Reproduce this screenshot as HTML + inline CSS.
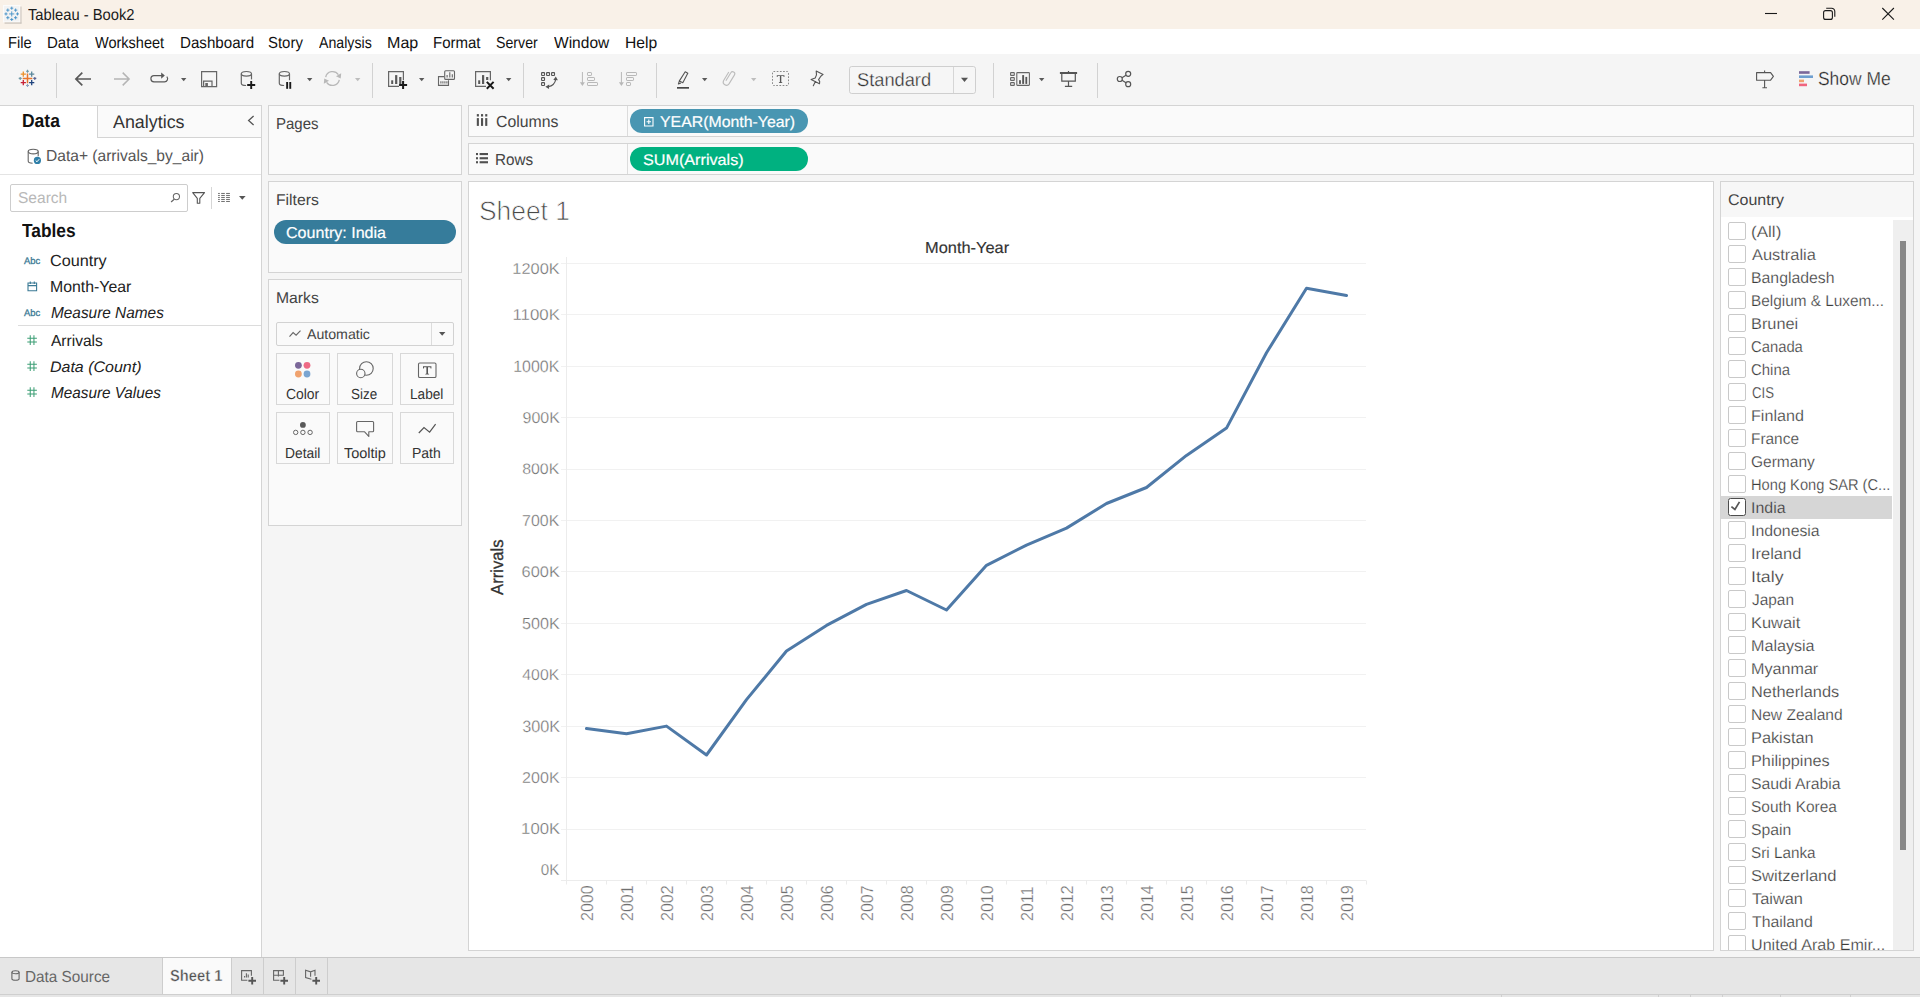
<!DOCTYPE html>
<html>
<head>
<meta charset="utf-8">
<title>Tableau - Book2</title>
<style>
*{box-sizing:border-box;margin:0;padding:0}
html,body{width:1920px;height:997px;overflow:hidden;background:#f5f5f5;font-family:"Liberation Sans",sans-serif;color:#333;text-rendering:geometricPrecision}
.t{position:absolute;white-space:nowrap;transform-origin:0 0}
.abs{position:absolute}
#titlebar{position:absolute;left:0;top:0;width:1920px;height:29px;background:#f9f1e8}
#titlebar .ttl{position:absolute;left:28px;top:4.5px;line-height:20px;font-size:15px;color:#1a1a1a;white-space:nowrap;transform-origin:0 0;transform:scaleX(.98)}
#menubar{position:absolute;left:0;top:29px;width:1920px;height:25px;background:#fff}
#menubar span{position:absolute;top:4px;line-height:20px;font-size:15px;color:#111;white-space:nowrap;transform-origin:0 0;transform:scaleX(.962)}
#toolbar{position:absolute;left:0;top:54px;width:1920px;height:51px;background:#f5f5f5}
.tdiv{position:absolute;top:63px;width:1px;height:35px;background:#d0d0d0}
svg{position:absolute;overflow:visible}
.card{position:absolute;background:#fafafa;border:1px solid #d4d4d4}
.ct{position:absolute;font-size:15px;color:#444;white-space:nowrap}
.pill{position:absolute;border-radius:12px;color:#fff;font-size:15px;white-space:nowrap}
.pill span{position:absolute;top:3.8px;-webkit-text-stroke:0.18px #fff}
#leftpane{position:absolute;left:0;top:105px;width:262px;height:852px;background:#fff;border-right:1px solid #d4d4d4}
.fld{position:absolute;left:50px;font-size:15.8px;color:#222;white-space:nowrap}
.fld.it{font-style:italic;font-size:15.5px;letter-spacing:-.05px}
.abc{position:absolute;left:23.6px;font-size:9.6px;color:#3b7a95;letter-spacing:0;-webkit-text-stroke:.3px #3b7a95;transform-origin:0 0;transform:scaleX(.98)}
.mbtn{position:absolute;width:54px;height:52px;border:1px solid #d8d8d8;background:#fafafa}
.mbtn span{position:absolute;left:0;width:52px;text-align:center;top:32px;font-size:13.6px;color:#333}
.ylab{position:absolute;width:60px;text-align:right;font-size:15.4px;color:#7a7a7a;left:499px;line-height:18px}
.xlab{position:absolute;font-size:15.9px;color:#7a7a7a;transform-origin:0 0;transform:rotate(-90deg);white-space:nowrap;line-height:18px;width:36px;text-align:right}
.cb{position:absolute;left:1728px;width:18px;height:18px;border:1px solid #c9c9c9;border-radius:2px;background:#fff}
.cl{position:absolute;left:1751px;font-size:15.4px;color:#444;white-space:nowrap;line-height:18px}
#tabbar{position:absolute;left:0;top:957px;width:1920px;height:40px;background:#e6e6e6;border-top:1px solid #c8c8c8}
</style>
</head>
<body>
<!-- TITLEBAR -->
<div id="titlebar">
<svg style="left:3px;top:5px" width="18.5" height="19.5" viewBox="0 0 18 19">
<rect x="0.5" y="0.5" width="16" height="16" fill="#f3f3f3" stroke="#fbfbfb"/>
<rect x="17" y="1.5" width="1" height="16.5" fill="#c9c2bb"/><rect x="1.5" y="17" width="16.5" height="1.2" fill="#c9c2bb"/>
<g stroke="#3f8fc6" stroke-width=".85" fill="none">
<path d="M8.5 6.2v5M6 8.7h5"/>
<path d="M8.5 1.6v3M7 3.1h3M8.5 12.6v3M7 14.1h3M2.9 7.2v3M1.4 8.7h3M14.1 7.2v3M12.6 8.7h3"/>
<path d="M4.7 3.4v3.2M3.1 5h3.2M12.3 3.4v3.2M10.7 5h3.2M4.7 10.8v3.2M3.1 12.4h3.2M12.3 10.8v3.2M10.7 12.4h3.2"/>
</g></svg>
<svg style="left:1765px;top:7px" width="130" height="14" viewBox="0 0 130 14">
<path d="M0 6.5h12" stroke="#1a1a1a" stroke-width="1.1" fill="none"/>
<rect x="58.6" y="3.6" width="8.8" height="8.8" rx="2" fill="none" stroke="#1a1a1a" stroke-width="1.1"/>
<path d="M61.2 1.2h5.4a3.2 3.2 0 0 1 3.2 3.2v5.4" fill="none" stroke="#1a1a1a" stroke-width="1.1"/>
<path d="M117.3 1l11.6 11.6M128.9 1l-11.6 11.6" stroke="#1a1a1a" stroke-width="1.1" fill="none"/>
</svg>
</div>
<!-- MENUBAR -->
<div id="menubar">

</div>
<!-- TOOLBAR -->
<div id="toolbar">
<svg style="left:0;top:0" width="1920" height="51" viewBox="0 54 1920 51">
<defs>
<path id="car" d="M0 0h5.4l-2.7 3.2z"/>
</defs>
<!-- dividers -->
<g fill="#d2d2d2">
<rect x="56" y="63" width="1" height="35"/><rect x="372" y="63" width="1" height="35"/><rect x="523" y="63" width="1" height="35"/><rect x="656" y="63" width="1" height="35"/><rect x="993" y="63" width="1" height="35"/><rect x="1097" y="63" width="1" height="35"/>
</g>
<!-- tableau logo -->
<g fill="none" stroke-width="1.3">
<path d="M27.5 73.6v9.6M22.7 78.4h9.6" stroke="#e8762d" stroke-width="1.5"/>
<path d="M23.3 71.5v5.2M20.7 74.1h5.2" stroke="#eb912c"/>
<path d="M31.7 71.5v5.2M29.1 74.1h5.2" stroke="#59879b"/>
<path d="M23.3 80.1v5.2M20.7 82.7h5.2" stroke="#c72035"/>
<path d="M31.7 80.1v5.2M29.1 82.7h5.2" stroke="#1f447e"/>
<path d="M27.5 69.8v3M26 71.3h3" stroke="#7099a6" stroke-width="1.1"/>
<path d="M27.5 84v3M26 85.5h3" stroke="#8da2c0" stroke-width="1.1"/>
<path d="M20.2 76.9v3M18.7 78.4h3" stroke="#7099a6" stroke-width="1.1"/>
<path d="M34.8 76.9v3M33.3 78.4h3" stroke="#5c6692" stroke-width="1.1"/>
</g>
<!-- back / forward -->
<path d="M91 79H76M82.3 72.6L75.9 79l6.4 6.4" fill="none" stroke="#595959" stroke-width="1.7"/>
<path d="M114 79h15M122.7 72.6l6.4 6.4-6.4 6.4" fill="none" stroke="#b4b4b4" stroke-width="1.5"/>
<!-- redo-ish -->
<path d="M163.5 75.6H154a3.1 3.1 0 0 0 0 6.2h10.5a3.1 3.1 0 0 0 2.3-5.2" fill="none" stroke="#595959" stroke-width="1.2"/>
<path d="M161.2 72.4l3.6 3.2-3.6 3.2z" fill="#595959"/>
<use href="#car" x="181" y="78" fill="#595959"/>
<!-- save -->
<path d="M201.6 71.6h15v15h-15z" fill="none" stroke="#666" stroke-width="1.2"/>
<path d="M203.6 86.6v-5.4h8.4v5.4" fill="none" stroke="#666" stroke-width="1.2"/>
<rect x="205.3" y="83" width="2.6" height="3.6" fill="#666"/>
<!-- new datasource -->
<g fill="none" stroke="#666" stroke-width="1.2">
<ellipse cx="246.4" cy="73.8" rx="5.1" ry="2.3"/>
<path d="M241.3 73.8v9.4c0 1.3 2 2.3 4.8 2.3"/>
<path d="M251.5 73.8v5.6"/>
</g>
<path d="M251.2 81v8M247.2 85h8" stroke="#1a1a1a" stroke-width="1.9" fill="none"/>
<!-- pause datasource -->
<g fill="none" stroke="#666" stroke-width="1.2">
<ellipse cx="284.4" cy="73.8" rx="5.1" ry="2.3"/>
<path d="M279.3 73.8v9.4c0 1.3 2 2.3 4.8 2.3"/>
<path d="M289.5 73.8v6.4"/>
</g>
<rect x="286.2" y="82" width="1.9" height="6.8" fill="#1a1a1a"/><rect x="289.3" y="82" width="1.9" height="6.8" fill="#1a1a1a"/>
<use href="#car" x="307" y="78" fill="#595959"/>
<!-- refresh -->
<g fill="none" stroke="#b8b8b8" stroke-width="1.3">
<path d="M325.7 77.2A7 7 0 0 1 338.4 74.7"/>
<path d="M339.3 79.8A7 7 0 0 1 326.6 82.3"/>
</g>
<path d="M341.2 73.2l-.5 5.4-4.7-2.4z" fill="#b8b8b8"/><path d="M323.8 83.8l.5-5.4 4.7 2.4z" fill="#b8b8b8"/>
<use href="#car" x="355" y="78" fill="#bdbdbd"/>
<!-- new worksheet -->
<path d="M399 86.4h-10.4V71.6h14.8v8.6" fill="none" stroke="#666" stroke-width="1.2"/>
<g fill="#595959"><rect x="391.2" y="80.3" width="2" height="3.7"/><rect x="395.1" y="75.1" width="2.2" height="8.9"/><rect x="399.2" y="77" width="2.2" height="7"/></g>
<path d="M403.1 81v8M399.1 85h8" stroke="#1a1a1a" stroke-width="2" fill="none"/>
<use href="#car" x="419" y="78" fill="#595959"/>
<!-- duplicate -->
<g fill="none" stroke="#666" stroke-width="1.1">
<path d="M444 76.6h-5.5v8.8h10v-5.2"/>
<rect x="444.7" y="70.8" width="9.8" height="8.6" rx="1" fill="#f5f5f5"/>
</g>
<path d="M447.1 77.5v-2.4M449.8 77.5v-5.2M452.3 77.5v-3.3M440.9 83.6v-2.4M442.9 83.6v-2.4M444.9 83.6v-2.4M446.9 83.6v-2.4" stroke="#666" stroke-width="1.1" fill="none"/>
<!-- clear sheet -->
<path d="M486 86.4h-10.4V71.6h14.8v8.6" fill="none" stroke="#666" stroke-width="1.2"/>
<g fill="#595959"><rect x="478.2" y="80.3" width="2" height="3.7"/><rect x="482" y="75.1" width="2.2" height="8.9"/><rect x="486.1" y="77" width="2.2" height="3"/></g>
<path d="M486.8 81.9l6.8 6.8M493.6 81.9l-6.8 6.8" stroke="#1a1a1a" stroke-width="2" fill="none"/>
<use href="#car" x="506" y="78" fill="#595959"/>
<!-- swap -->
<g fill="none" stroke="#555" stroke-width="1.1">
<rect x="541.6" y="72.6" width="2.9" height="2.9" rx=".5"/><rect x="546.6" y="72.6" width="2.9" height="2.9" rx=".5"/><rect x="551.6" y="72.6" width="2.9" height="2.9" rx=".5"/>
<rect x="541.6" y="77.6" width="2.9" height="2.9" rx=".5"/><rect x="541.6" y="82.6" width="2.9" height="2.9" rx=".5"/>
<path d="M548 86.7c4.4-.6 7.2-3.5 7.8-7.8"/>
</g>
<path d="M553.3 80l2.5-3.6 2.1 3.8z" fill="#555"/><path d="M549.2 84.5l-3.8 2.2 3.6 2.2z" fill="#555"/>
<!-- sort asc -->
<g fill="none" stroke="#b8b8b8" stroke-width="1">
<path d="M582.4 72v11"/><rect x="587.5" y="72.5" width="4" height="3" rx=".6"/><rect x="587.5" y="77.5" width="7" height="3" rx=".6"/><rect x="587.5" y="82.5" width="10" height="3" rx=".6"/>
</g><path d="M579.9 82.3h5l-2.5 3.8z" fill="#b8b8b8"/>
<!-- sort desc -->
<g fill="none" stroke="#b8b8b8" stroke-width="1">
<path d="M621.4 72v11"/><rect x="626.5" y="72.5" width="10" height="3" rx=".6"/><rect x="626.5" y="77.5" width="7" height="3" rx=".6"/><rect x="626.5" y="82.5" width="4" height="3" rx=".6"/>
</g><path d="M618.9 82.3h5l-2.5 3.8z" fill="#b8b8b8"/>
<!-- highlighter -->
<path d="M685.2 71.8l2.6 1.5-5 9.4-3.4-1.8z M679.4 80.9l-1 3 2.6-1" fill="none" stroke="#555" stroke-width="1.1" stroke-linejoin="round"/>
<rect x="677" y="87" width="12" height="1.7" fill="#484848"/>
<use href="#car" x="702" y="78" fill="#595959"/>
<!-- paperclip -->
<path d="M725.9 80.8l4.9-8a2.1 2.1 0 0 1 3.7 2.1l-5.5 9a3.2 3.2 0 0 1-5.5-3.2l5.3-8.7" fill="none" stroke="#bcbcbc" stroke-width="1.1"/>
<use href="#car" x="751" y="78" fill="#bdbdbd"/>
<!-- text box -->
<rect x="772.5" y="71.5" width="16" height="14" rx="1" fill="none" stroke="#8a8a8a" stroke-width="1" stroke-dasharray="1.7 1.5"/>
<path d="M776.8 75.2h7.6v1.8h-.7l-.3-.9h-2.1v6l1 .3v.6h-3.4v-.6l1-.3v-6h-2.1l-.3.9h-.7z" fill="#555"/>
<!-- pin -->
<path d="M816.2 71.1L823.1 74.4L820.8 76.2L818.6 79.6L819.7 81.5L819.5 83.7L811.1 79.4L815.2 78L816.5 74.9ZM815.4 81.6L813.3 85.7" fill="none" stroke="#555" stroke-width="1.1" stroke-linejoin="round" stroke-linecap="round"/>
<!-- standard dropdown -->
<rect x="849.5" y="66.5" width="126" height="27" rx="2.2" fill="#f6f6f6" stroke="#cfcfcf"/>
<rect x="953" y="67" width="1" height="26" fill="#d6d6d6"/>
<path d="M961 77.8h7l-3.5 4.2z" fill="#555"/>
<!-- show/hide cards -->
<g fill="none" stroke="#666" stroke-width="1.1">
<rect x="1010.6" y="72.6" width="3.7" height="2.8" rx=".5"/><rect x="1010.6" y="77.6" width="3.7" height="2.8" rx=".5"/><rect x="1010.6" y="82.6" width="3.7" height="2.8" rx=".5"/>
<rect x="1016.8" y="72.6" width="12.6" height="12.8" rx=".6"/>
</g>
<g fill="#555"><rect x="1019.1" y="80.2" width="1.8" height="3.7"/><rect x="1022.2" y="75.1" width="1.9" height="8.8"/><rect x="1025.4" y="76.9" width="1.8" height="7"/></g>
<use href="#car" x="1039" y="78" fill="#595959"/>
<!-- presentation -->
<rect x="1059.9" y="72" width="17.2" height="2" fill="#555"/>
<path d="M1061.8 74v7.2h13.5v-7.2M1068.5 81.2v5.2M1064.9 86.4h7.3M1068.5 71v1" fill="none" stroke="#555" stroke-width="1.2"/>
<!-- share -->
<g fill="none" stroke="#555" stroke-width="1.2">
<circle cx="1128.2" cy="73.8" r="2.5"/><circle cx="1119.8" cy="79" r="2.5"/><circle cx="1128.2" cy="84.2" r="2.5"/>
<path d="M1122 77.7l4-2.5M1122 80.3l4 2.5"/>
</g>
<!-- signpost -->
<path d="M1764.6 70.4v2M1764.6 80.4v7.4M1762.4 87.8h4.6M1756.6 72.6h14l2.8 3.8-2.8 3.8h-14z" fill="none" stroke="#555" stroke-width="1.1" stroke-linejoin="round"/>
<!-- show me -->
<rect x="1799" y="71.2" width="10.6" height="2.6" fill="#7b6799"/><rect x="1799" y="75.4" width="14" height="2.6" fill="#6f9fd0"/><rect x="1799" y="79.6" width="5" height="2.6" fill="#f0a26e"/><rect x="1799" y="83.6" width="8" height="2.6" fill="#f0657f"/>
</svg>
</div>
<!-- LEFTPANE -->
<div id="leftpane">
<div class="abs" style="left:97px;top:0;width:164px;height:33px;background:#fafafa;border-left:1px solid #d4d4d4;border-bottom:1px solid #d4d4d4;border-top:1px solid #d4d4d4"></div>
<svg style="left:247px;top:10px" width="8" height="11" viewBox="0 0 8 11"><path d="M6.6 1L1.6 5.5l5 4.5" fill="none" stroke="#555" stroke-width="1.3"/></svg>
<!-- datasource -->
<svg style="left:26.8px;top:43px" width="16" height="17" viewBox="0 0 16 17">
<g fill="none" stroke="#666" stroke-width="1.1"><ellipse cx="6.2" cy="3.6" rx="5" ry="2.3"/><path d="M1.2 3.6v9.4c0 1.2 1.8 2.2 4.4 2.3M11.2 3.6v4.6"/></g>
<circle cx="10.4" cy="12.4" r="3.6" fill="#2f7fa8"/><path d="M8.7 12.5l1.3 1.3 2.2-2.6" fill="none" stroke="#fff" stroke-width="1"/>
</svg>
<div class="abs" style="left:0;top:69px;width:261px;height:1px;background:#e4e4e4"></div>
<!-- search -->
<div class="abs" style="left:10px;top:79px;width:178px;height:28px;border:1px solid #cdcdcd;border-radius:2px;background:#fff"></div>
<svg style="left:0;top:0" width="262" height="120" viewBox="0 105 262 120"><circle cx="176.4" cy="196.6" r="3.1" fill="none" stroke="#666" stroke-width="1.05"/><path d="M174.2 199.2L171.1 202" stroke="#666" stroke-width="1.2" fill="none"/>
<path d="M192.7 192.6H204.5L199.8 198.3V203.2H197.3V198.3Z" fill="none" stroke="#555" stroke-width="1.1" stroke-linejoin="round"/></svg>
<div class="abs" style="left:211px;top:82px;width:1px;height:22px;background:#d6d6d6"></div>
<svg style="left:0;top:0" width="262" height="120" viewBox="0 105 262 120"><g fill="#5c5c5c"><rect x="218.1" y="192.95" width="1.7" height=".9"/><rect x="221.2" y="192.95" width="3.6" height=".9"/><rect x="226.1" y="192.95" width="3.8" height=".9"/><rect x="218.1" y="194.95" width="1.7" height=".9"/><rect x="221.2" y="194.95" width="3.6" height=".9"/><rect x="226.1" y="194.95" width="3.8" height=".9"/><rect x="218.1" y="196.95" width="1.7" height=".9"/><rect x="221.2" y="196.95" width="3.6" height=".9"/><rect x="226.1" y="196.95" width="3.8" height=".9"/><rect x="218.1" y="198.95" width="1.7" height=".9"/><rect x="221.2" y="198.95" width="3.6" height=".9"/><rect x="226.1" y="198.95" width="3.8" height=".9"/><rect x="218.1" y="200.95" width="1.7" height=".9"/><rect x="221.2" y="200.95" width="3.6" height=".9"/><rect x="226.1" y="200.95" width="3.8" height=".9"/></g></svg>
<svg style="left:239px;top:91px" width="7" height="4" viewBox="0 0 7 4"><path d="M0 0h6.6L3.3 3.8z" fill="#555"/></svg>
<!-- tables -->
<div class="abc" style="top:151px">Abc</div>
<svg style="left:26.5px;top:175.6px" width="11" height="11" viewBox="0 0 11 11"><path d="M1 2h8.6v7.8H1zM1 4.6h8.6M3.3.4v2.6M7.3.4v2.6" fill="none" stroke="#3b7a95" stroke-width="1.1"/></svg>

<div class="abc" style="top:203px">Abc</div>
<div class="abs" style="left:18px;top:220px;width:243px;height:1px;background:#dcdcdc"></div>
<svg class="hash" style="left:26.8px;top:229.5px" width="10.2" height="10.2" viewBox="0 0 11 11"><path d="M3.5.3v10.4M7.5.3v10.4M.3 3.5h10.4M.3 7.5h10.4" fill="none" stroke="#3c9e75" stroke-width="1.1"/></svg>

<svg class="hash" style="left:26.8px;top:255.5px" width="10.2" height="10.2" viewBox="0 0 11 11"><path d="M3.5.3v10.4M7.5.3v10.4M.3 3.5h10.4M.3 7.5h10.4" fill="none" stroke="#3c9e75" stroke-width="1.1"/></svg>

<svg class="hash" style="left:26.8px;top:281.5px" width="10.2" height="10.2" viewBox="0 0 11 11"><path d="M3.5.3v10.4M7.5.3v10.4M.3 3.5h10.4M.3 7.5h10.4" fill="none" stroke="#3c9e75" stroke-width="1.1"/></svg>

</div>
<div class="abs" style="left:0;top:105px;width:262px;height:1px;background:#d4d4d4"></div>
<!-- CARDS -->
<div class="card" style="left:268px;top:105px;width:194px;height:70px"></div>
<div class="card" style="left:268px;top:181px;width:194px;height:92px"></div>
<div class="pill" style="left:274px;top:220px;width:182px;height:24px;background:#367c9b"></div>
<div class="card" style="left:268px;top:279px;width:194px;height:247px"></div>
<!-- marks dropdown -->
<div class="abs" style="left:276px;top:322px;width:178px;height:24px;border:1px solid #d2d2d2;border-radius:2px;background:#fafafa"></div>
<div class="abs" style="left:431px;top:323px;width:1px;height:22px;background:#dcdcdc"></div>
<svg style="left:289px;top:330px" width="12" height="8" viewBox="0 0 12 8"><path d="M.5 6.6l3.6-4 3 2.6 4.4-4.6" fill="none" stroke="#666" stroke-width="1.1"/></svg>
<svg style="left:439px;top:332px" width="7" height="4" viewBox="0 0 7 4"><path d="M0 0h6.4L3.2 3.8z" fill="#555"/></svg>
<!-- marks buttons -->
<div class="mbtn" style="left:276px;top:353px"></div>
<div class="mbtn" style="left:337px;top:353px;width:56px"></div>
<div class="mbtn" style="left:400px;top:353px"></div>
<div class="mbtn" style="left:276px;top:412px"></div>
<div class="mbtn" style="left:337px;top:412px;width:56px"></div>
<div class="mbtn" style="left:400px;top:412px"></div>
<svg style="left:268px;top:353px" width="194" height="112" viewBox="268 353 194 112">
<!-- color -->
<circle cx="298.4" cy="365.3" r="3.4" fill="#7b6799"/><circle cx="307" cy="365.3" r="3.4" fill="#ee6a85"/><circle cx="298.4" cy="374" r="3.4" fill="#f0a26e"/><circle cx="307" cy="374" r="3.4" fill="#7ba5d1"/>
<!-- size -->
<g fill="none" stroke="#666" stroke-width="1.1"><circle cx="366.4" cy="368.5" r="6.8"/><circle cx="360.8" cy="373.5" r="4.2" fill="#fafafa"/></g>
<!-- label -->
<rect x="418.5" y="363" width="17.5" height="14.5" rx="1.3" fill="none" stroke="#666" stroke-width="1.1"/>
<path d="M423 366.2h8.4v2.2h-.8l-.3-1.2h-2.3v6.4l1.1.3v.7h-3.8v-.7l1.1-.3v-6.4h-2.3l-.3 1.2h-.8z" fill="#555"/>
<!-- detail -->
<circle cx="302.9" cy="424.9" r="2.9" fill="#595959"/>
<g fill="none" stroke="#666" stroke-width="1"><circle cx="295.7" cy="432.4" r="2.2"/><circle cx="302.9" cy="432.4" r="2.2"/><circle cx="310.1" cy="432.4" r="2.2"/></g>
<!-- tooltip -->
<path d="M357.6 421.5h15a1 1 0 0 1 1 1v8.3a1 1 0 0 1-1 1h-3.8v4.6l-4.2-4.6H357.6a1 1 0 0 1-1-1v-8.3a1 1 0 0 1 1-1z" fill="none" stroke="#666" stroke-width="1.1" stroke-linejoin="round"/>
<!-- path -->
<path d="M418.8 433l5.2-5.5 5.6 4.6 6-8" fill="none" stroke="#555" stroke-width="1.2"/>
</svg>
<!-- SHELVES -->
<div class="card" style="left:468px;top:105px;width:1446px;height:32px"></div>
<div class="card" style="left:468px;top:143px;width:1446px;height:32px"></div>
<div class="abs" style="left:627px;top:106px;width:1px;height:30px;background:#dcdcdc"></div>
<div class="abs" style="left:627px;top:144px;width:1px;height:30px;background:#dcdcdc"></div>
<svg style="left:476px;top:114px" width="12" height="12" viewBox="0 0 12 12"><g fill="#505050"><rect x=".8" y=".1" width="2.1" height="2.4"/><rect x="5" y=".1" width="2.1" height="2.4"/><rect x="9.2" y=".1" width="2.1" height="2.4"/><rect x=".8" y="4.1" width="2.1" height="7.8"/><rect x="5" y="4.1" width="2.1" height="7.8"/><rect x="9.2" y="4.1" width="2.1" height="7.8"/></g></svg>
<svg style="left:476px;top:153px" width="12" height="11" viewBox="0 0 12 11"><g fill="#505050"><rect x="0" y="0" width="2" height="2.1"/><rect x="3.6" y="0" width="8.4" height="2.1"/><rect x="0" y="4.2" width="2" height="2.1"/><rect x="3.6" y="4.2" width="8.4" height="2.1"/><rect x="0" y="8.2" width="2" height="2.1"/><rect x="3.6" y="8.2" width="8.4" height="2.1"/></g></svg>
<div class="pill" style="left:630px;top:109px;width:178px;height:24px;background:#4996b2">
<svg style="left:13.5px;top:7.5px" width="10" height="10" viewBox="0 0 10 10"><path d="M.6.6h8.4v8.4H.6zM4.8 2.6v4.4M2.6 4.8h4.4" fill="none" stroke="#fff" stroke-width="1.1"/></svg></div>
<div class="pill" style="left:630px;top:147px;width:178px;height:24px;background:#00b180"></div>
<!-- VIEW -->
<div class="abs" style="left:468px;top:181px;width:1246px;height:770px;background:#fff;border:1px solid #d4d4d4"></div>
<svg style="left:468px;top:181px" width="1246" height="770" viewBox="468 181 1246 770"><path d="M561 829.5H1366M561 777.5H1366M561 726.5H1366M561 674.5H1366M561 623.5H1366M561 571.5H1366M561 520.5H1366M561 469.5H1366M561 417.5H1366M561 366.5H1366M561 314.5H1366M561 263.5H1366" stroke="#f1f1f1" stroke-width="1" fill="none"/><path d="M566.5 257V880.5M561 880.5H1366" stroke="#ececec" stroke-width="1" fill="none"/><path d="M566.5 880.5v4M606.5 880.5v4M646.5 880.5v4M686.5 880.5v4M726.5 880.5v4M766.5 880.5v4M806.5 880.5v4M846.5 880.5v4M886.5 880.5v4M926.5 880.5v4M966.5 880.5v4M1006.5 880.5v4M1046.5 880.5v4M1086.5 880.5v4M1126.5 880.5v4M1166.5 880.5v4M1206.5 880.5v4M1246.5 880.5v4M1286.5 880.5v4M1326.5 880.5v4M1366.5 880.5v4" stroke="#ebebeb" stroke-width="1" fill="none"/><polyline points="586.5,728.5 626.5,733.8 666.5,726.1 706.5,755 746.5,699.6 786.5,651 826.5,625.4 866.5,604.3 906.5,590.5 946.5,610 986.5,565.3 1026.5,545.1 1066.5,528.1 1106.5,503.5 1146.5,487.5 1186.5,455.4 1226.5,428.1 1266.5,352.8 1306.5,288.3 1346.5,295.5" fill="none" stroke="#4e79a7" stroke-width="3" stroke-linejoin="round" stroke-linecap="round"/></svg>
<!-- FILTERCARD -->
<div class="abs" style="left:1720px;top:181px;width:194px;height:770px;background:#fff;border:1px solid #d4d4d4;overflow:hidden"><div class="abs" style="left:0;top:0;width:192px;height:35px;background:#f7f7f7"></div></div>
<div class="abs" style="left:1893px;top:220px;width:20px;height:730px;background:#efefef"></div>
<div class="abs" style="left:1900px;top:241px;width:6px;height:609px;background:#888"></div>
<div class="abs" style="left:1721px;top:496px;width:171px;height:23px;background:#d6d6d6"></div>
<div class="abs" style="left:1721px;top:222px;width:172px;height:728px;overflow:hidden">
<div class="cb" style="left:7px;top:0px"></div>
<div class="cb" style="left:7px;top:23px"></div>
<div class="cb" style="left:7px;top:46px"></div>
<div class="cb" style="left:7px;top:69px"></div>
<div class="cb" style="left:7px;top:92px"></div>
<div class="cb" style="left:7px;top:115px"></div>
<div class="cb" style="left:7px;top:138px"></div>
<div class="cb" style="left:7px;top:161px"></div>
<div class="cb" style="left:7px;top:184px"></div>
<div class="cb" style="left:7px;top:207px"></div>
<div class="cb" style="left:7px;top:230px"></div>
<div class="cb" style="left:7px;top:253px"></div>
<div class="cb" style="left:7px;top:276px"></div>
<div class="cb" style="left:7px;top:299px"></div>
<div class="cb" style="left:7px;top:322px"></div>
<div class="cb" style="left:7px;top:345px"></div>
<div class="cb" style="left:7px;top:368px"></div>
<div class="cb" style="left:7px;top:391px"></div>
<div class="cb" style="left:7px;top:414px"></div>
<div class="cb" style="left:7px;top:437px"></div>
<div class="cb" style="left:7px;top:460px"></div>
<div class="cb" style="left:7px;top:483px"></div>
<div class="cb" style="left:7px;top:506px"></div>
<div class="cb" style="left:7px;top:529px"></div>
<div class="cb" style="left:7px;top:552px"></div>
<div class="cb" style="left:7px;top:575px"></div>
<div class="cb" style="left:7px;top:598px"></div>
<div class="cb" style="left:7px;top:621px"></div>
<div class="cb" style="left:7px;top:644px"></div>
<div class="cb" style="left:7px;top:667px"></div>
<div class="cb" style="left:7px;top:690px"></div>
<div class="cb" style="left:7px;top:713px"></div>
<div class="cb" style="left:7px;top:276px;border:1.3px solid #4d4d4d;border-radius:2.5px"></div>
<svg style="left:7px;top:276px" width="18" height="18" viewBox="1728 498 18 18"><path d="M1731.4 506.6l3.5 2.9 4.6-7.6" fill="none" stroke="#555" stroke-width="1.7"/></svg>
</div>
<!-- TABBAR -->
<div id="tabbar">
<div class="abs" style="left:0;top:36px;width:1920px;height:1px;background:#cfcfcf"></div>
<div class="abs" style="left:1501px;top:37px;width:1px;height:3px;background:#cfcfcf"></div><div class="abs" style="left:1658px;top:37px;width:1px;height:3px;background:#cfcfcf"></div><div class="abs" style="left:1690px;top:37px;width:1px;height:3px;background:#cfcfcf"></div><div class="abs" style="left:1722px;top:37px;width:1px;height:3px;background:#cfcfcf"></div><div class="abs" style="left:1780px;top:37px;width:1px;height:3px;background:#cfcfcf"></div><div class="abs" style="left:1850px;top:37px;width:1px;height:3px;background:#cfcfcf"></div>
<div class="abs" style="left:162px;top:0;width:70px;height:36px;background:#fafafa;border-left:1px solid #cdcdcd;border-right:1px solid #cdcdcd"></div>
<div class="abs" style="left:263px;top:0;width:1px;height:36px;background:#cdcdcd"></div>
<div class="abs" style="left:295px;top:0;width:1px;height:36px;background:#cdcdcd"></div>
<div class="abs" style="left:327px;top:0;width:1px;height:36px;background:#cdcdcd"></div>
<svg style="left:10.5px;top:12px" width="9" height="11" viewBox="0 0 9 11"><g fill="none" stroke="#666" stroke-width="1.1"><ellipse cx="4.5" cy="2.2" rx="3.6" ry="1.5"/><path d="M.9 2.2v6.6c0 .8 1.6 1.5 3.6 1.5s3.6-.7 3.6-1.5V2.2"/></g></svg>
<svg style="left:240px;top:10px" width="80" height="18" viewBox="240 967 80 18">
<g fill="none" stroke="#666" stroke-width="1.1">
<path d="M247.4 979.2h-5.8v-9.6h9.8v5.2"/><path d="M244.6 976.6v-1.6M246.4 976.6v-4.4M248.2 976.6v-3"/>
<path d="M279.4 979.2h-5.8v-9.6h9.8v5.2M273.6 974.2h9.8M278.4 969.6v6"/>
<path d="M311.4 978.2l-5.8-1.6v-7.4l5 1.6 4.4-1.6v5.6M310.6 970.8v5"/>
</g>
<g fill="none" stroke="#555" stroke-width="1.9"><path d="M252.2 976v7.6M248.4 979.8h7.6M284.2 976v7.6M280.4 979.8h7.6M316.2 976v7.6M312.4 979.8h7.6"/></g>
</svg>
</div>
<!-- TEXTS -->
<div class="t" id="t_title" style="left:27.94px;top:5.5px;line-height:20px;font-size:15.9px;color:#1a1a1a;transform:scaleX(0.9278);">Tableau - Book2</div>
<div class="t" id="t_m0" style="left:7.81px;top:33px;line-height:20px;font-size:16.05px;color:#111;transform:scaleX(0.9156);">File</div>
<div class="t" id="t_m1" style="left:46.54px;top:33px;line-height:20px;font-size:16.05px;color:#111;transform:scaleX(0.9376);">Data</div>
<div class="t" id="t_m2" style="left:94.59px;top:33px;line-height:20px;font-size:16.05px;color:#111;transform:scaleX(0.9055);">Worksheet</div>
<div class="t" id="t_m3" style="left:179.71px;top:33px;line-height:20px;font-size:16.05px;color:#111;transform:scaleX(0.9443);">Dashboard</div>
<div class="t" id="t_m4" style="left:267.9px;top:33px;line-height:20px;font-size:16.05px;color:#111;transform:scaleX(0.9313);">Story</div>
<div class="t" id="t_m5" style="left:318.58px;top:33px;line-height:20px;font-size:16.05px;color:#111;transform:scaleX(0.8843);">Analysis</div>
<div class="t" id="t_m6" style="left:387.2px;top:33px;line-height:20px;font-size:16.05px;color:#111;transform:scaleX(1.0017);">Map</div>
<div class="t" id="t_m7" style="left:433.39px;top:33px;line-height:20px;font-size:16.05px;color:#111;transform:scaleX(0.9354);">Format</div>
<div class="t" id="t_m8" style="left:496.08px;top:33px;line-height:20px;font-size:16.05px;color:#111;transform:scaleX(0.8848);">Server</div>
<div class="t" id="t_m9" style="left:553.59px;top:33px;line-height:20px;font-size:16.05px;color:#111;transform:scaleX(0.9688);">Window</div>
<div class="t" id="t_m10" style="left:624.98px;top:33px;line-height:20px;font-size:16.05px;color:#111;transform:scaleX(0.978);">Help</div>
<div class="t" id="t_data" style="left:21.72px;top:110.5px;line-height:20px;font-size:18.75px;color:#111;transform:scaleX(0.9312);font-weight:bold;">Data</div>
<div class="t" id="t_analytics" style="left:113.24px;top:111.5px;line-height:20px;font-size:18.31px;color:#333;transform:scaleX(0.9768);">Analytics</div>
<div class="t" id="t_ds" style="left:46.03px;top:146.5px;line-height:20px;font-size:15.99px;color:#555;transform:scaleX(0.9744);">Data+ (arrivals_by_air)</div>
<div class="t" id="t_search" style="left:17.84px;top:188.5px;line-height:20px;font-size:15.7px;color:#b8b8b8;transform:scaleX(0.9904);">Search</div>
<div class="t" id="t_tables" style="left:21.76px;top:221.5px;line-height:20px;font-size:18.9px;color:#111;transform:scaleX(0.917);font-weight:bold;">Tables</div>
<div class="t" id="t_f0" style="left:49.76px;top:251.5px;line-height:20px;font-size:15.99px;color:#222;transform:scaleX(1.0133);">Country</div>
<div class="t" id="t_f1" style="left:49.79px;top:277.5px;line-height:20px;font-size:15.99px;color:#222;transform:scaleX(0.9908);">Month-Year</div>
<div class="t" id="t_f2" style="left:51.38px;top:303.5px;line-height:20px;font-size:15.99px;color:#222;transform:scaleX(0.9622);font-style:italic;">Measure Names</div>
<div class="t" id="t_f3" style="left:51.12px;top:331.5px;line-height:20px;font-size:15.84px;color:#222;transform:scaleX(0.9824);">Arrivals</div>
<div class="t" id="t_f4" style="left:50.49px;top:357.5px;line-height:20px;font-size:15.26px;color:#222;transform:scaleX(1.0479);font-style:italic;">Data (Count)</div>
<div class="t" id="t_f5" style="left:51.38px;top:383.5px;line-height:20px;font-size:15.84px;color:#222;transform:scaleX(0.9659);font-style:italic;">Measure Values</div>
<div class="t" id="t_pages" style="left:275.87px;top:114.5px;line-height:20px;font-size:15.84px;color:#444;transform:scaleX(0.9483);">Pages</div>
<div class="t" id="t_filters" style="left:275.85px;top:190.5px;line-height:20px;font-size:15.55px;color:#444;transform:scaleX(1.0116);">Filters</div>
<div class="t" id="t_marks" style="left:276.14px;top:288.5px;line-height:20px;font-size:15.55px;color:#444;transform:scaleX(1.0121);">Marks</div>
<div class="t" id="t_pillf" style="left:285.97px;top:223.5px;line-height:20px;font-size:15.7px;color:#fff;transform:scaleX(1.0244);-webkit-text-stroke:.2px #fff;">Country: India</div>
<div class="t" id="t_auto" style="left:306.59px;top:324px;line-height:20px;font-size:14.1px;color:#444;transform:scaleX(1.0041);">Automatic</div>
<div class="t" id="t_b0" style="left:285.68px;top:385px;line-height:20px;font-size:14.68px;color:#333;transform:scaleX(0.9481);">Color</div>
<div class="t" id="t_b1" style="left:351.16px;top:385px;line-height:20px;font-size:14.68px;color:#333;transform:scaleX(0.9166);">Size</div>
<div class="t" id="t_b2" style="left:410.35px;top:385px;line-height:20px;font-size:14.68px;color:#333;transform:scaleX(0.9298);">Label</div>
<div class="t" id="t_b3" style="left:285.25px;top:444px;line-height:20px;font-size:14.53px;color:#333;transform:scaleX(0.953);">Detail</div>
<div class="t" id="t_b4" style="left:344px;top:444px;line-height:20px;font-size:14.53px;color:#333;transform:scaleX(0.9988);">Tooltip</div>
<div class="t" id="t_b5" style="left:412.21px;top:444px;line-height:20px;font-size:14.53px;color:#333;transform:scaleX(0.963);">Path</div>
<div class="t" id="t_cols" style="left:495.6px;top:112px;line-height:20px;font-size:16.28px;color:#444;transform:scaleX(0.9728);">Columns</div>
<div class="t" id="t_rows" style="left:495.37px;top:150px;line-height:20px;font-size:16.13px;color:#444;transform:scaleX(0.946);">Rows</div>
<div class="t" id="t_pilly" style="left:660.37px;top:112.5px;line-height:20px;font-size:15.55px;color:#fff;transform:scaleX(1.0196);-webkit-text-stroke:.2px #fff;">YEAR(Month-Year)</div>
<div class="t" id="t_pills" style="left:642.74px;top:150.5px;line-height:20px;font-size:15.41px;color:#fff;transform:scaleX(1.05);-webkit-text-stroke:.2px #fff;">SUM(Arrivals)</div>
<div class="t" id="t_sheet" style="left:478.6px;top:195px;line-height:32px;font-size:26.74px;color:#484848;transform:scaleX(0.9863);-webkit-text-stroke:.75px #fff;">Sheet 1</div>
<div class="t" id="t_hdr" style="left:924.7px;top:238.5px;line-height:20px;font-size:15.99px;color:#333;transform:scaleX(1.0254);-webkit-text-stroke:.15px #333;">Month-Year</div>
<div class="t" id="t_ctitle" style="left:1727.6px;top:190.5px;line-height:20px;font-size:15.55px;color:#444;transform:scaleX(1.0276);">Country</div>
<div class="t" id="t_dsrc" style="left:24.99px;top:967.5px;line-height:20px;font-size:15.99px;color:#666;transform:scaleX(0.9578);">Data Source</div>
<div class="t" id="t_stab" style="left:170.22px;top:966.5px;line-height:20px;font-size:15.99px;color:#505050;transform:scaleX(0.9199);font-weight:bold;-webkit-text-stroke:.4px #fafafa;">Sheet 1</div>
<div class="t" id="t_std" style="left:857.18px;top:69.5px;line-height:20px;font-size:18.6px;color:#333;transform:scaleX(0.9811);-webkit-text-stroke:.3px #f6f6f6;">Standard</div>
<div class="t" id="t_showme" style="left:1818.25px;top:69.5px;line-height:20px;font-size:18.9px;color:#222;transform:scaleX(0.9222);-webkit-text-stroke:.3px #f5f5f5;">Show Me</div>
<div class="t" id="t_c0" style="left:1750.77px;top:222.5px;line-height:20px;font-size:15.7px;color:#3c3c3c;transform:scaleX(1.0877);-webkit-text-stroke:.22px #fff;">(All)</div>
<div class="t" id="t_c1" style="left:1751.7px;top:245.5px;line-height:20px;font-size:15.7px;color:#3c3c3c;transform:scaleX(1.0468);-webkit-text-stroke:.22px #fff;">Australia</div>
<div class="t" id="t_c2" style="left:1750.87px;top:268.5px;line-height:20px;font-size:15.7px;color:#3c3c3c;transform:scaleX(1.0084);-webkit-text-stroke:.22px #fff;">Bangladesh</div>
<div class="t" id="t_c3" style="left:1750.8px;top:291.5px;line-height:20px;font-size:15.7px;color:#3c3c3c;transform:scaleX(0.9785);-webkit-text-stroke:.22px #fff;">Belgium &amp; Luxem...</div>
<div class="t" id="t_c4" style="left:1750.73px;top:314.5px;line-height:20px;font-size:15.7px;color:#3c3c3c;transform:scaleX(1.0406);-webkit-text-stroke:.22px #fff;">Brunei</div>
<div class="t" id="t_c5" style="left:1750.88px;top:337.5px;line-height:20px;font-size:15.7px;color:#3c3c3c;transform:scaleX(0.9433);-webkit-text-stroke:.22px #fff;">Canada</div>
<div class="t" id="t_c6" style="left:1751px;top:360.5px;line-height:20px;font-size:15.7px;color:#3c3c3c;transform:scaleX(0.952);-webkit-text-stroke:.22px #fff;">China</div>
<div class="t" id="t_c7" style="left:1751.79px;top:383.5px;line-height:20px;font-size:15.7px;color:#3c3c3c;transform:scaleX(0.8413);-webkit-text-stroke:.22px #fff;">CIS</div>
<div class="t" id="t_c8" style="left:1750.87px;top:406.5px;line-height:20px;font-size:15.7px;color:#3c3c3c;transform:scaleX(1.0285);-webkit-text-stroke:.22px #fff;">Finland</div>
<div class="t" id="t_c9" style="left:1750.61px;top:429.5px;line-height:20px;font-size:15.7px;color:#3c3c3c;transform:scaleX(0.9823);-webkit-text-stroke:.22px #fff;">France</div>
<div class="t" id="t_c10" style="left:1750.85px;top:452.5px;line-height:20px;font-size:15.7px;color:#3c3c3c;transform:scaleX(0.9891);-webkit-text-stroke:.22px #fff;">Germany</div>
<div class="t" id="t_c11" style="left:1751.09px;top:475.5px;line-height:20px;font-size:15.7px;color:#3c3c3c;transform:scaleX(0.9342);-webkit-text-stroke:.22px #fff;">Hong Kong SAR (C...</div>
<div class="t" id="t_c12" style="left:1750.85px;top:498.5px;line-height:20px;font-size:15.7px;color:#3c3c3c;transform:scaleX(1.0156);-webkit-text-stroke:.22px #d6d6d6;">India</div>
<div class="t" id="t_c13" style="left:1750.68px;top:521.5px;line-height:20px;font-size:15.7px;color:#3c3c3c;transform:scaleX(1.0095);-webkit-text-stroke:.22px #fff;">Indonesia</div>
<div class="t" id="t_c14" style="left:1750.87px;top:544.5px;line-height:20px;font-size:15.7px;color:#3c3c3c;transform:scaleX(1.0491);-webkit-text-stroke:.22px #fff;">Ireland</div>
<div class="t" id="t_c15" style="left:1750.74px;top:567.5px;line-height:20px;font-size:15.7px;color:#3c3c3c;transform:scaleX(1.1307);-webkit-text-stroke:.22px #fff;">Italy</div>
<div class="t" id="t_c16" style="left:1751.89px;top:590.5px;line-height:20px;font-size:15.7px;color:#3c3c3c;transform:scaleX(0.9827);-webkit-text-stroke:.22px #fff;">Japan</div>
<div class="t" id="t_c17" style="left:1750.85px;top:613.5px;line-height:20px;font-size:15.7px;color:#3c3c3c;transform:scaleX(1.0472);-webkit-text-stroke:.22px #fff;">Kuwait</div>
<div class="t" id="t_c18" style="left:1750.71px;top:636.5px;line-height:20px;font-size:15.7px;color:#3c3c3c;transform:scaleX(1.027);-webkit-text-stroke:.22px #fff;">Malaysia</div>
<div class="t" id="t_c19" style="left:1750.85px;top:659.5px;line-height:20px;font-size:15.7px;color:#3c3c3c;transform:scaleX(1.0283);-webkit-text-stroke:.22px #fff;">Myanmar</div>
<div class="t" id="t_c20" style="left:1750.85px;top:682.5px;line-height:20px;font-size:15.7px;color:#3c3c3c;transform:scaleX(1.0423);-webkit-text-stroke:.22px #fff;">Netherlands</div>
<div class="t" id="t_c21" style="left:1751.05px;top:705.5px;line-height:20px;font-size:15.7px;color:#3c3c3c;transform:scaleX(0.991);-webkit-text-stroke:.22px #fff;">New Zealand</div>
<div class="t" id="t_c22" style="left:1750.85px;top:728.5px;line-height:20px;font-size:15.7px;color:#3c3c3c;transform:scaleX(1.0397);-webkit-text-stroke:.22px #fff;">Pakistan</div>
<div class="t" id="t_c23" style="left:1750.85px;top:751.5px;line-height:20px;font-size:15.7px;color:#3c3c3c;transform:scaleX(1.036);-webkit-text-stroke:.22px #fff;">Philippines</div>
<div class="t" id="t_c24" style="left:1750.8px;top:774.5px;line-height:20px;font-size:15.7px;color:#3c3c3c;transform:scaleX(1.0072);-webkit-text-stroke:.22px #fff;">Saudi Arabia</div>
<div class="t" id="t_c25" style="left:1751px;top:797.5px;line-height:20px;font-size:15.7px;color:#3c3c3c;transform:scaleX(0.984);-webkit-text-stroke:.22px #fff;">South Korea</div>
<div class="t" id="t_c26" style="left:1750.98px;top:820.5px;line-height:20px;font-size:15.7px;color:#3c3c3c;transform:scaleX(1.0048);-webkit-text-stroke:.22px #fff;">Spain</div>
<div class="t" id="t_c27" style="left:1750.61px;top:843.5px;line-height:20px;font-size:15.7px;color:#3c3c3c;transform:scaleX(0.9735);-webkit-text-stroke:.22px #fff;">Sri Lanka</div>
<div class="t" id="t_c28" style="left:1750.91px;top:866.5px;line-height:20px;font-size:15.7px;color:#3c3c3c;transform:scaleX(1.0545);-webkit-text-stroke:.22px #fff;">Switzerland</div>
<div class="t" id="t_c29" style="left:1751.68px;top:889.5px;line-height:20px;font-size:15.7px;color:#3c3c3c;transform:scaleX(1.0418);-webkit-text-stroke:.22px #fff;">Taiwan</div>
<div class="t" id="t_c30" style="left:1751.81px;top:912.5px;line-height:20px;font-size:15.7px;color:#3c3c3c;transform:scaleX(1.0093);-webkit-text-stroke:.22px #fff;">Thailand</div>
<div class="t" id="t_c31" style="left:1750.96px;top:935.5px;line-height:20px;font-size:15.7px;color:#3c3c3c;transform:scaleX(1.0267);-webkit-text-stroke:.22px #fff;">United Arab Emir...</div>
<div class="t" id="t_y0" style="right:1360.58px;transform-origin:100% 0;top:860.5px;line-height:20px;font-size:15.77px;color:#707070;transform:scaleX(0.9641);-webkit-text-stroke:.3px #fff;">0K</div>
<div class="t" id="t_y1" style="right:1359.97px;transform-origin:100% 0;top:819.5px;line-height:20px;font-size:15.92px;color:#707070;transform:scaleX(1.0515);-webkit-text-stroke:.3px #fff;">100K</div>
<div class="t" id="t_y2" style="right:1360.47px;transform-origin:100% 0;top:768.5px;line-height:20px;font-size:15.72px;color:#707070;transform:scaleX(1.0243);-webkit-text-stroke:.3px #fff;">200K</div>
<div class="t" id="t_y3" style="right:1360.28px;transform-origin:100% 0;top:717px;line-height:20px;font-size:16.35px;color:#707070;transform:scaleX(0.9922);-webkit-text-stroke:.3px #fff;">300K</div>
<div class="t" id="t_y4" style="right:1360.33px;transform-origin:100% 0;top:665.5px;line-height:20px;font-size:15.53px;color:#707070;transform:scaleX(1.0189);-webkit-text-stroke:.3px #fff;">400K</div>
<div class="t" id="t_y5" style="right:1360.46px;transform-origin:100% 0;top:614px;line-height:20px;font-size:16.16px;color:#707070;transform:scaleX(1.0007);-webkit-text-stroke:.3px #fff;">500K</div>
<div class="t" id="t_y6" style="right:1360.31px;transform-origin:100% 0;top:562.5px;line-height:20px;font-size:15.33px;color:#707070;transform:scaleX(1.0675);-webkit-text-stroke:.3px #fff;">600K</div>
<div class="t" id="t_y7" style="right:1360.32px;transform-origin:100% 0;top:511.5px;line-height:20px;font-size:15.96px;color:#707070;transform:scaleX(0.997);-webkit-text-stroke:.3px #fff;">700K</div>
<div class="t" id="t_y8" style="right:1360.67px;transform-origin:100% 0;top:459.5px;line-height:20px;font-size:15.14px;color:#707070;transform:scaleX(1.0516);-webkit-text-stroke:.3px #fff;">800K</div>
<div class="t" id="t_y9" style="right:1360.11px;transform-origin:100% 0;top:408.5px;line-height:20px;font-size:15.77px;color:#707070;transform:scaleX(1.0124);-webkit-text-stroke:.3px #fff;">900K</div>
<div class="t" id="t_y10" style="right:1360.81px;transform-origin:100% 0;top:357px;line-height:20px;font-size:16.4px;color:#707070;transform:scaleX(0.9746);-webkit-text-stroke:.3px #fff;">1000K</div>
<div class="t" id="t_y11" style="right:1360.06px;transform-origin:100% 0;top:305.5px;line-height:20px;font-size:15.58px;color:#707070;transform:scaleX(1.0818);-webkit-text-stroke:.3px #fff;">1100K</div>
<div class="t" id="t_y12" style="right:1359.96px;transform-origin:100% 0;top:259.5px;line-height:20px;font-size:15.48px;color:#707070;transform:scaleX(1.0593);-webkit-text-stroke:.3px #fff;">1200K</div>
<div class="t" id="t_yttl" style="left:486.9px;top:595.2px;line-height:20px;font-size:17.44px;color:#333;transform:rotate(-90deg) scaleX(0.957);-webkit-text-stroke:.3px #333;">Arrivals</div>
<div class="t" id="t_x0" style="left:576.5px;top:920.9px;line-height:20px;font-size:17.44px;color:#707070;transform:rotate(-90deg) scaleX(0.92);-webkit-text-stroke:.3px #fff;">2000</div>
<div class="t" id="t_x1" style="left:616.5px;top:920.9px;line-height:20px;font-size:17.44px;color:#707070;transform:rotate(-90deg) scaleX(0.92);-webkit-text-stroke:.3px #fff;">2001</div>
<div class="t" id="t_x2" style="left:656.5px;top:920.9px;line-height:20px;font-size:17.44px;color:#707070;transform:rotate(-90deg) scaleX(0.92);-webkit-text-stroke:.3px #fff;">2002</div>
<div class="t" id="t_x3" style="left:696.5px;top:920.9px;line-height:20px;font-size:17.44px;color:#707070;transform:rotate(-90deg) scaleX(0.92);-webkit-text-stroke:.3px #fff;">2003</div>
<div class="t" id="t_x4" style="left:736.5px;top:920.9px;line-height:20px;font-size:17.44px;color:#707070;transform:rotate(-90deg) scaleX(0.92);-webkit-text-stroke:.3px #fff;">2004</div>
<div class="t" id="t_x5" style="left:776.5px;top:920.9px;line-height:20px;font-size:17.44px;color:#707070;transform:rotate(-90deg) scaleX(0.92);-webkit-text-stroke:.3px #fff;">2005</div>
<div class="t" id="t_x6" style="left:816.5px;top:920.9px;line-height:20px;font-size:17.44px;color:#707070;transform:rotate(-90deg) scaleX(0.92);-webkit-text-stroke:.3px #fff;">2006</div>
<div class="t" id="t_x7" style="left:856.5px;top:920.9px;line-height:20px;font-size:17.44px;color:#707070;transform:rotate(-90deg) scaleX(0.92);-webkit-text-stroke:.3px #fff;">2007</div>
<div class="t" id="t_x8" style="left:896.5px;top:920.9px;line-height:20px;font-size:17.44px;color:#707070;transform:rotate(-90deg) scaleX(0.92);-webkit-text-stroke:.3px #fff;">2008</div>
<div class="t" id="t_x9" style="left:936.5px;top:920.9px;line-height:20px;font-size:17.44px;color:#707070;transform:rotate(-90deg) scaleX(0.92);-webkit-text-stroke:.3px #fff;">2009</div>
<div class="t" id="t_x10" style="left:976.5px;top:920.9px;line-height:20px;font-size:17.44px;color:#707070;transform:rotate(-90deg) scaleX(0.92);-webkit-text-stroke:.3px #fff;">2010</div>
<div class="t" id="t_x11" style="left:1016.5px;top:920.9px;line-height:20px;font-size:17.44px;color:#707070;transform:rotate(-90deg) scaleX(0.92);-webkit-text-stroke:.3px #fff;">2011</div>
<div class="t" id="t_x12" style="left:1056.5px;top:920.9px;line-height:20px;font-size:17.44px;color:#707070;transform:rotate(-90deg) scaleX(0.92);-webkit-text-stroke:.3px #fff;">2012</div>
<div class="t" id="t_x13" style="left:1096.5px;top:920.9px;line-height:20px;font-size:17.44px;color:#707070;transform:rotate(-90deg) scaleX(0.92);-webkit-text-stroke:.3px #fff;">2013</div>
<div class="t" id="t_x14" style="left:1136.5px;top:920.9px;line-height:20px;font-size:17.44px;color:#707070;transform:rotate(-90deg) scaleX(0.92);-webkit-text-stroke:.3px #fff;">2014</div>
<div class="t" id="t_x15" style="left:1176.5px;top:920.9px;line-height:20px;font-size:17.44px;color:#707070;transform:rotate(-90deg) scaleX(0.92);-webkit-text-stroke:.3px #fff;">2015</div>
<div class="t" id="t_x16" style="left:1216.5px;top:920.9px;line-height:20px;font-size:17.44px;color:#707070;transform:rotate(-90deg) scaleX(0.92);-webkit-text-stroke:.3px #fff;">2016</div>
<div class="t" id="t_x17" style="left:1256.5px;top:920.9px;line-height:20px;font-size:17.44px;color:#707070;transform:rotate(-90deg) scaleX(0.92);-webkit-text-stroke:.3px #fff;">2017</div>
<div class="t" id="t_x18" style="left:1296.5px;top:920.9px;line-height:20px;font-size:17.44px;color:#707070;transform:rotate(-90deg) scaleX(0.92);-webkit-text-stroke:.3px #fff;">2018</div>
<div class="t" id="t_x19" style="left:1336.5px;top:920.9px;line-height:20px;font-size:17.44px;color:#707070;transform:rotate(-90deg) scaleX(0.92);-webkit-text-stroke:.3px #fff;">2019</div>
</body>
</html>
